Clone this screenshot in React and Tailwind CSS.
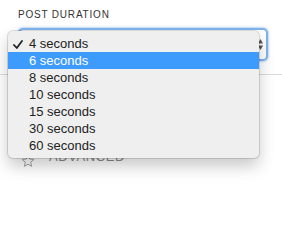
import React from 'react';

const OPTIONS = ['4 seconds', '6 seconds', '8 seconds', '10 seconds', '15 seconds', '30 seconds', '60 seconds'];

function App() {
  const selected = '4 seconds';
  const hovered = '6 seconds';

  return (
    <div className="relative w-[282px] h-[241px] overflow-hidden bg-white font-['Liberation_Sans',Arial,sans-serif]">
      <div className="pl-[18px] pr-[14px] pt-[9px]">
        <div className="text-[10px] leading-[12px] tracking-[0.8px] text-[#333]">POST DURATION</div>
        <div className="mt-[7px] flex h-[33px] w-[250px] items-center justify-end rounded-[5px] border-2 border-[#7fb3ec] bg-white pr-[3px] shadow-[0_0_2px_1px_rgba(120,170,235,0.45)]">
          <svg width="5" height="12" viewBox="0 0 5 12" className="text-[#555]">
            <path d="M2.5 0 L5 4.5 L0 4.5 Z" fill="currentColor" />
            <path d="M2.5 11 L5 6.5 L0 6.5 Z" fill="currentColor" />
          </svg>
        </div>
      </div>

      {/* separator */}
      <div className="mt-[13px] border-t border-[#dcdcdc]" />

      <div className="mt-[74px] flex items-start pl-[21px]">
        <svg width="14" height="14" viewBox="0 0 24 24" className="mt-[5px] text-[#9a9a9a]" fill="none" stroke="currentColor" strokeWidth="1.6" strokeLinejoin="round">
          <path d="M12 2 L14.9 8.6 L22 9.3 L16.6 14.1 L18.2 21.2 L12 17.5 L5.8 21.2 L7.4 14.1 L2 9.3 L9.1 8.6 Z" />
        </svg>
        <span className="ml-[14px] text-[13px] leading-[16px] tracking-[0.6px] text-[#8a8a8a]">ADVANCED</span>
      </div>

      {/* open select menu */}
      <div className="absolute left-[8px] top-[31px] w-[251px] rounded-[5px] bg-[#efefef] py-[4px] shadow-[0_0_0_1px_rgba(0,0,0,0.13),0_8px_16px_rgba(0,0,0,0.22)]">
        {OPTIONS.map((opt) => (
          <div
            key={opt}
            className={
              'relative h-[17px] pl-[21px] text-[13px] leading-[17px] ' +
              (opt === hovered ? 'bg-[#3d9bfd] text-white' : 'text-[#222]')
            }
          >
            {opt === selected && (
              <svg width="10" height="9" viewBox="0 0 10 9" className="absolute left-[5px] top-[5px]">
                <path d="M1 5 L3.8 8 L9 1" fill="none" stroke="#222" strokeWidth="1.8" strokeLinecap="round" strokeLinejoin="round" />
              </svg>
            )}
            {opt}
          </div>
        ))}
      </div>
    </div>
  );
}

export default App;
